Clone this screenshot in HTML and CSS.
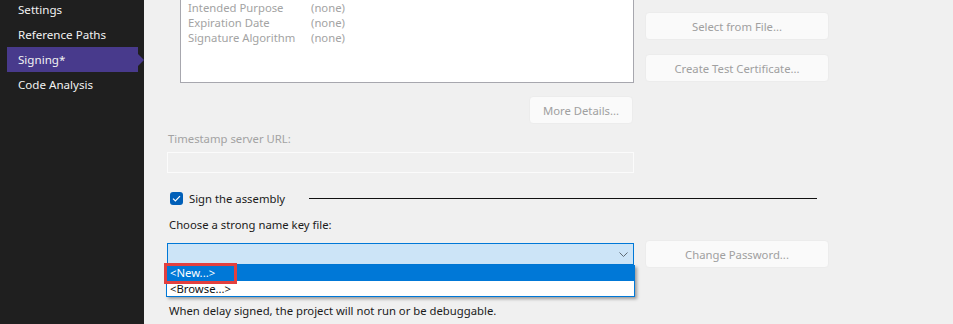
FILE: index.html
```html
<!DOCTYPE html>
<html lang="en">
<head>
    <meta charset="UTF-8">
    <title>Signing</title>
    <link rel="stylesheet" href="styles.css">
</head>
<body>
    <nav class="sidebar">
        <div class="nav-item">Settings</div>
        <div class="nav-item">Reference Paths</div>
        <div class="nav-item active">Signing*</div>
        <div class="nav-item">Code Analysis</div>
    </nav>

    <main class="page">
        <section class="cert-row">
            <div class="cert-box">
                <div class="cert-line"><span class="cert-key">Intended Purpose</span><span>(none)</span></div>
                <div class="cert-line"><span class="cert-key">Expiration Date</span><span>(none)</span></div>
                <div class="cert-line"><span class="cert-key">Signature Algorithm</span><span>(none)</span></div>
            </div>
            <div class="cert-actions">
                <button class="btn" disabled>Select from File...</button>
                <button class="btn" disabled>Create Test Certificate...</button>
            </div>
        </section>

        <div class="details-row">
            <button class="btn btn-details" disabled>More Details...</button>
        </div>

        <div class="field-label disabled">Timestamp server URL:</div>
        <div class="textbox"></div>

        <div class="check-row">
            <span class="checkbox">
                <svg width="9" height="7" viewBox="0 0 9 7"><path d="M1 3.6 L3.4 6 L8 1.2" fill="none" stroke="#fff" stroke-width="1.2"/></svg>
            </span>
            <span class="check-text">Sign the assembly</span>
            <span class="rule"></span>
        </div>

        <div class="field-label key-label">Choose a strong name key file:</div>
        <div class="combo-row">
            <div class="combo">
                <svg class="chevron" width="9" height="5" viewBox="0 0 9 5"><path d="M0.5 0.5 L4.5 4.5 L8.5 0.5" fill="none" stroke="#5f6b75" stroke-width="1"/></svg>
                <ul class="dropdown">
                    <li class="selected">&lt;New...&gt;</li>
                    <li>&lt;Browse...&gt;</li>
                </ul>
                <div class="highlight"></div>
            </div>
            <button class="btn btn-password" disabled>Change Password...</button>
        </div>

        <p class="note">When delay signed, the project will not run or be debuggable.</p>
    </main>
</body>
</html>
```

FILE: styles.css
```css
* {
    box-sizing: border-box;
}

body {
    display: flex;
    height: 324px;
    margin: 0;
    overflow: hidden;
    font-family: "Noto Sans", "Open Sans", sans-serif;
    font-size: 11.3px;
    color: #1b1b1b;
    background-color: #f0f0f0;
}

.sidebar {
    width: 144px;
    flex-shrink: 0;
    padding-top: 0;
    margin-top: -3px;
    background-color: #1f1f1f;
    color: #f2f2f2;
    font-size: 11.6px;
}

.nav-item {
    position: relative;
    height: 25px;
    line-height: 25px;
    margin-left: 7px;
    margin-right: 6px;
    padding-left: 11px;
}

.nav-item.active {
    background-color: #483a8c;
}

.nav-item.active::after {
    content: '';
    position: absolute;
    top: 7px;
    right: -6px;
    border-top: 6px solid transparent;
    border-bottom: 6px solid transparent;
    border-left: 6px solid #483a8c;
}

.page {
    flex: 1;
    padding-left: 23px;
}

.cert-row {
    display: grid;
    grid-template-columns: 467px 184px;
    column-gap: 11px;
    margin-top: -20px;
}

.cert-box {
    margin-left: 13px;
    height: 103px;
    padding: 19px 7px 0;
    background-color: #fff;
    border: 1px solid #a7a7ae;
    color: #a3a3a3;
}

.cert-line {
    display: flex;
    height: 15px;
    line-height: 15px;
}

.cert-key {
    width: 123px;
}

.cert-actions {
    display: flex;
    flex-direction: column;
    gap: 14px;
    padding-top: 32px;
}

.btn {
    height: 28px;
    padding: 0;
    font-family: inherit;
    font-size: 11.3px;
    color: #a0a0a0;
    background-color: #fafafa;
    border: 1px solid #ececec;
    border-radius: 4px;
}

.details-row {
    display: flex;
    justify-content: flex-end;
    width: 466px;
    margin-top: 13px;
}

.btn-details {
    width: 104px;
}

.field-label {
    height: 16px;
    line-height: 16px;
    padding-left: 1px;
}

.field-label.disabled {
    margin-top: 7px;
    color: #a3a3a3;
}

.textbox {
    width: 467px;
    height: 21px;
    margin-top: 5px;
    border: 1px solid #fbfbfb;
    background-color: #f0f0f0;
}

.check-row {
    display: flex;
    align-items: center;
    width: 650px;
    height: 16px;
    margin-top: 17px;
}

.checkbox {
    display: flex;
    align-items: center;
    justify-content: center;
    width: 13px;
    height: 13px;
    margin-left: 3px;
    border-radius: 3px;
    background-color: #005fb8;
}

.check-text {
    margin-left: 6px;
}

.rule {
    flex: 1;
    height: 1px;
    margin-left: 24px;
    background-color: #111;
}

.key-label {
    margin-top: 11px;
    padding-left: 2px;
}

.combo-row {
    display: flex;
    align-items: center;
    gap: 11px;
    height: 28px;
    margin-top: 7px;
}

.combo {
    position: relative;
    width: 467px;
    height: 22px;
    background-color: #cce4f7;
    border: 1px solid #0078d7;
}

.chevron {
    position: absolute;
    right: 5px;
    top: 8px;
}

.dropdown {
    position: absolute;
    top: 21px;
    left: -2px;
    width: 469px;
    margin: 0;
    padding: 0;
    list-style: none;
    background-color: #fff;
    border: 1px solid #0078d7;
    border-top: none;
    box-shadow: 2px 2px 3px rgba(0, 0, 0, 0.35);
    z-index: 2;
}

.dropdown li {
    height: 16px;
    line-height: 16px;
    padding-left: 3px;
    color: #111;
}

.dropdown li + li {
    height: 15px;
    line-height: 15px;
}

.dropdown li.selected {
    background-color: #0078d7;
    color: #fff;
}

.highlight {
    position: absolute;
    top: 19px;
    left: -4px;
    width: 73px;
    height: 21px;
    border: 3px solid #e2403f;
    z-index: 3;
}

.btn-password {
    width: 184px;
}

.note {
    height: 16px;
    line-height: 16px;
    margin: 35px 0 0;
    padding-left: 2px;
}
```
